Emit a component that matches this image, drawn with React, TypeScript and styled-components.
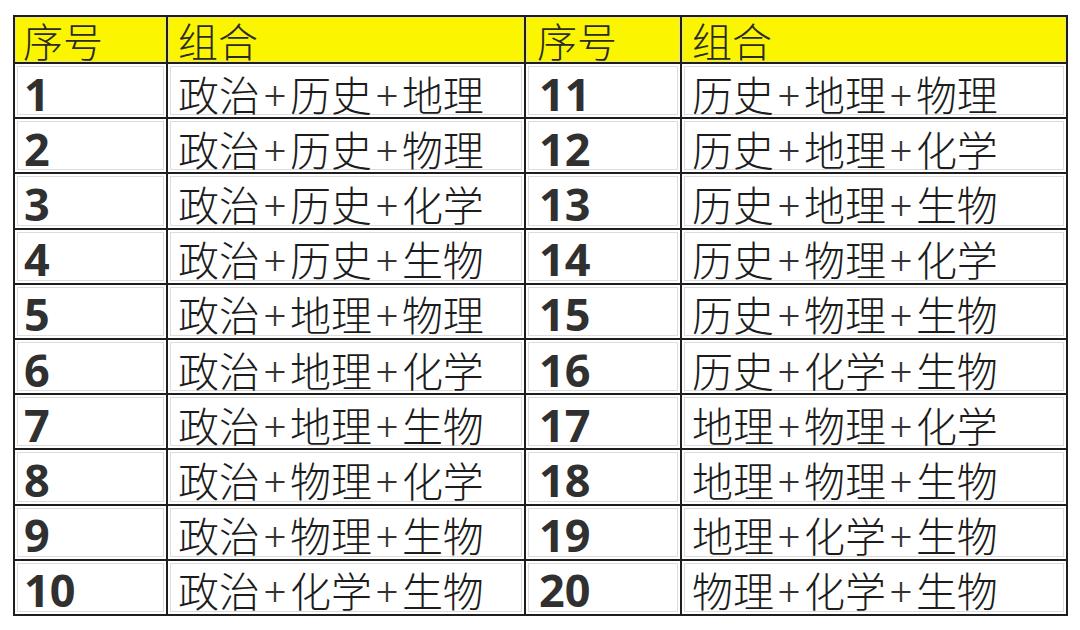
import React from "react";
import styled, { createGlobalStyle } from "styled-components";

const Global = createGlobalStyle`
  html, body { margin: 0; padding: 0; background: #ffffff; }
  body { width: 1080px; height: 630px; overflow: hidden; }
`;

const Page = styled.div`
  padding: 15px 12px 0 13px;
`;

const Table = styled.div`
  display: grid;
  grid-template-columns: 151px 356px 154px 384px;
  grid-template-rows: 45px repeat(10, 1fr);
  gap: 2px;
  padding: 2px;
  width: 1055px;
  height: 601px;
  box-sizing: border-box;
  background: #1e1e1e;
`;

const HeadCell = styled.div<{ $pad: number }>`
  background: #fbf600;
  display: flex;
  align-items: center;
  padding-left: ${(p) => p.$pad}px;
  font-family: "Noto Sans CJK SC", "Noto Sans", sans-serif;
  font-size: 40px;
  font-weight: 300;
  color: #2a2a2a;
  line-height: 1;
  box-shadow: inset 0 0 0 1px #e9e37a;
`;

const NumCell = styled.div<{ $pad: number }>`
  background: #ffffff;
  display: flex;
  align-items: center;
  padding-left: ${(p) => p.$pad}px;
  padding-top: 5px;
  font-family: "Open Sans", "Noto Sans", sans-serif;
  font-size: 45px;
  font-weight: 700;
  color: #303030;
  line-height: 1;
  box-shadow: inset 0 0 0 2px #ffffff, inset 0 0 0 3px #dcdcdc;
`;

const ComboCell = styled.div`
  background: #ffffff;
  display: flex;
  align-items: center;
  padding-left: 10px;
  padding-top: 5px;
  font-family: "Noto Sans CJK SC", "Noto Sans", sans-serif;
  font-size: 41px;
  font-weight: 300;
  color: #1c1c1c;
  line-height: 1;
  white-space: nowrap;
  box-shadow: inset 0 0 0 2px #ffffff, inset 0 0 0 3px #dcdcdc;
`;

const Plus = styled.span`
  margin: 0 4px 0 4px;
  font-weight: 200;
  color: #333333;
`;

const left = [
  "政治+历史+地理",
  "政治+历史+物理",
  "政治+历史+化学",
  "政治+历史+生物",
  "政治+地理+物理",
  "政治+地理+化学",
  "政治+地理+生物",
  "政治+物理+化学",
  "政治+物理+生物",
  "政治+化学+生物",
];

const right = [
  "历史+地理+物理",
  "历史+地理+化学",
  "历史+地理+生物",
  "历史+物理+化学",
  "历史+物理+生物",
  "历史+化学+生物",
  "地理+物理+化学",
  "地理+物理+生物",
  "地理+化学+生物",
  "物理+化学+生物",
];

const Combo = ({ text }: { text: string }) => {
  const parts = text.split("+");
  return (
    <ComboCell>
      {parts.map((p, i) => (
        <React.Fragment key={i}>
          {i > 0 && <Plus>+</Plus>}
          {p}
        </React.Fragment>
      ))}
    </ComboCell>
  );
};

export default function App() {
  return (
    <>
      <Global />
      <Page>
        <Table>
          <HeadCell $pad={8}>序号</HeadCell>
          <HeadCell $pad={10}>组合</HeadCell>
          <HeadCell $pad={11}>序号</HeadCell>
          <HeadCell $pad={10}>组合</HeadCell>
          {left.map((l, i) => (
            <React.Fragment key={i}>
              <NumCell $pad={9}>{i + 1}</NumCell>
              <Combo text={l} />
              <NumCell $pad={13}>{i + 11}</NumCell>
              <Combo text={right[i]} />
            </React.Fragment>
          ))}
        </Table>
      </Page>
    </>
  );
}
